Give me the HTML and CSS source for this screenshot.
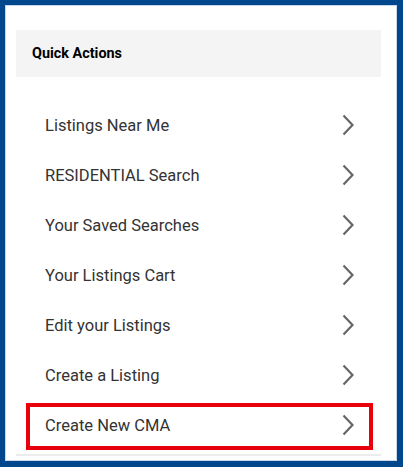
FILE: index.html
```html
<!DOCTYPE html>
<html>
<head>
<meta charset="utf-8">
<link rel="stylesheet" href="styles.css">
</head>
<body>
<div class="frame">
  <div class="panel">
    <div class="panel-head">Quick Actions</div>
    <ul class="actions">
      <li class="action"><span>Listings Near Me</span><svg class="chev" viewBox="0 0 12 22"><path d="M1.5 1.5 L10.5 11 L1.5 20.5"/></svg></li>
      <li class="action"><span>RESIDENTIAL Search</span><svg class="chev" viewBox="0 0 12 22"><path d="M1.5 1.5 L10.5 11 L1.5 20.5"/></svg></li>
      <li class="action"><span>Your Saved Searches</span><svg class="chev" viewBox="0 0 12 22"><path d="M1.5 1.5 L10.5 11 L1.5 20.5"/></svg></li>
      <li class="action"><span>Your Listings Cart</span><svg class="chev" viewBox="0 0 12 22"><path d="M1.5 1.5 L10.5 11 L1.5 20.5"/></svg></li>
      <li class="action"><span>Edit your Listings</span><svg class="chev" viewBox="0 0 12 22"><path d="M1.5 1.5 L10.5 11 L1.5 20.5"/></svg></li>
      <li class="action"><span>Create a Listing</span><svg class="chev" viewBox="0 0 12 22"><path d="M1.5 1.5 L10.5 11 L1.5 20.5"/></svg></li>
      <li class="action highlighted"><span>Create New CMA</span><svg class="chev" viewBox="0 0 12 22"><path d="M1.5 1.5 L10.5 11 L1.5 20.5"/></svg><div class="mark"></div></li>
    </ul>
  </div>
</div>
</body>
</html>
```

FILE: styles.css
```css
* { box-sizing: border-box; }
html, body { margin: 0; padding: 0; background: #00478d; }
body { font-family: Roboto, "Liberation Sans", sans-serif; }
.frame {
  width: 403px;
  height: 467px;
  border-style: solid;
  border-color: #00478d;
  border-width: 5px 6px 6px 5px;
  background: #fff;
  box-shadow: inset 0 0 0 1px #c9d7e6;
  padding: 25px 16px 0 11px;
  overflow: hidden;
}
.panel-head {
  height: 47px;
  background: #f4f4f4;
  display: flex;
  align-items: center;
  padding-left: 16px;
  font-weight: 700;
  font-size: 14.4px;
  color: #000;
}
.actions {
  list-style: none;
  margin: 23px 0 0 0;
  padding: 0 0 4px 0;
  border-bottom: 2px solid #ececec;
}
.action {
  position: relative;
  height: 50px;
  display: flex;
  align-items: center;
  justify-content: space-between;
  padding: 0 27px 0 29px;
  font-size: 16.5px;
  color: #333;
}
.chev {
  width: 12px;
  height: 22px;
  fill: none;
  stroke: #666;
  stroke-width: 2.2;
}
.mark {
  position: absolute;
  left: 10px;
  right: 8px;
  top: 3px;
  bottom: 0;
  border: 4px solid #e8000b;
}
```
